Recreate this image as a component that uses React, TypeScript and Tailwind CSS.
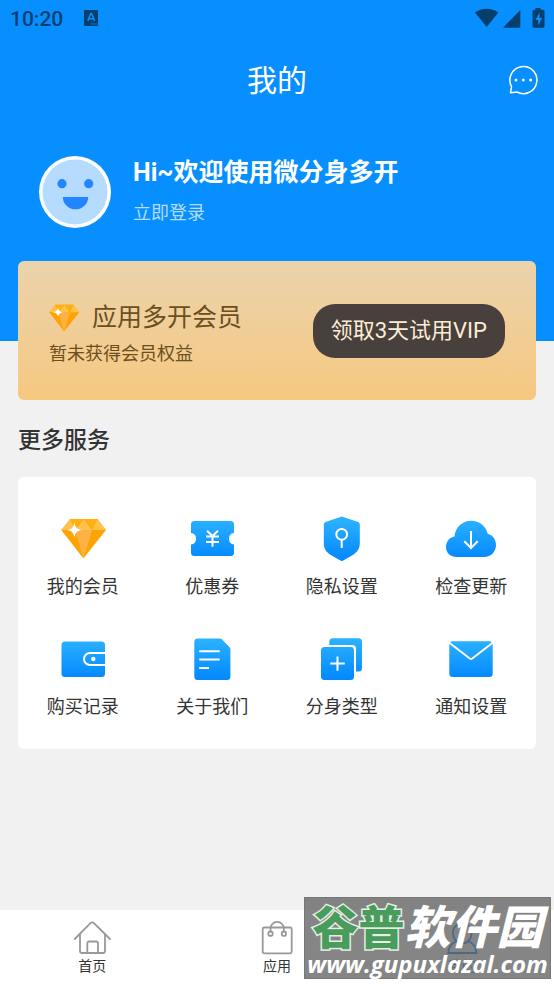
import React from 'react';

const BlueGradient: React.FC<{ id: string }> = ({ id }) => (
  <defs>
    <linearGradient id={id} x1="0" y1="8" x2="0" y2="46" gradientUnits="userSpaceOnUse">
      <stop offset="0" stopColor="#2bb1ff" />
      <stop offset="1" stopColor="#0489ff" />
    </linearGradient>
  </defs>
);

const Diamond: React.FC<{ className: string; viewBox: string }> = ({ className, viewBox }) => (
  <svg className={className} viewBox={viewBox} aria-hidden="true">
    <path d="M13.2 7h27.2L49 18 26.4 46.6 4.3 18z" fill="#ffa305" />
    <path d="M13.2 7 4.3 18h14zM26.8 7 18 18h17.2zM40.4 7 49 18H35.2z" fill="#ffc24c" />
    <path d="M13.2 7h13.6L18 18zM26.8 7h13.6l-5.2 11z" fill="#ffb00f" />
    <path d="M18 18h17.2l-8.8 28.6z" fill="#ffb244" />
    <path d="M17.4 10.8q.8 6.4 7 7.2-6.2.8-7 7.2-.8-6.4-7-7.2 6.200-.8 7-7.200z" fill="#fff" />
  </svg>
);

const Coupon = () => (
  <svg className="size-[52px]" viewBox="0 0 52 52" fill="none" aria-hidden="true">
    <BlueGradient id="coupon" />
    <path d="M8.500 9h36a3.500 3.500 0 0 1 3.500 3.500V21a5.800 5.800 0 0 0 0 11.500v8a3.500 3.500 0 0 1-3.500 3.500h-36A3.500 3.500 0 0 1 5 40.500v-8A5.800 5.800 0 0 0 5 21v-8.500A3.500 3.500 0 0 1 8.500 9z" fill="url(#coupon)" />
    <path d="m21 18.700 5.500 5.300 5.500-5.300M20 24.500h13M20 30h13M26.500 24.500v10.200" stroke="#fff" strokeWidth="2" />
  </svg>
);

const Shield = () => (
  <svg className="size-[52px]" viewBox="0 0 52 52" fill="none" aria-hidden="true">
    <BlueGradient id="shield" />
    <path d="M24.400 4.900q1.400-.6 2.800 0l15 5.200q1.600.6 1.600 2.300v18.600c0 6-2.800 9.400-7 12l-9.600 5.600q-1.400.7-2.800 0L14.800 43c-4.200-2.600-7-6-7-12V12.400q0-1.700 1.600-2.300z" fill="url(#shield)" />
    <circle cx="25.700" cy="22.300" r="5.400" stroke="#fff" strokeWidth="2" />
    <path d="M25.700 27.700V36" stroke="#fff" strokeWidth="2" />
  </svg>
);

const Cloud = () => (
  <svg className="size-[52px]" viewBox="0 0 52 52" fill="none" aria-hidden="true">
    <BlueGradient id="cloud" />
    <path d="M11.500 45C5.500 45 1 40.700 1 35c0-5.400 3.500-9.600 8.500-10.500C10.200 15.500 17.200 8.700 26 8.700c8.300 0 15 5.300 16.700 13C47.700 23 51 27.400 51 33c0 7-5.200 12-12 12z" fill="url(#cloud)" />
    <path d="M26 19v17M19.300 29.300 26 36l6.700-6.700" stroke="#fff" strokeWidth="2" />
  </svg>
);

const Wallet = () => (
  <svg className="size-[52px]" viewBox="0 0 52 52" fill="none" aria-hidden="true">
    <BlueGradient id="wallet" />
    <rect x="4.500" y="9.500" width="43.500" height="35.500" rx="3.500" fill="url(#wallet)" />
    <path d="M48.500 21H33a6 6 0 0 0 0 12h15.500" stroke="#fff" strokeWidth="2" />
    <circle cx="36.300" cy="27" r="2.200" fill="#fff" />
  </svg>
);

const Document = () => (
  <svg className="size-[52px]" viewBox="0 0 52 52" fill="none" aria-hidden="true">
    <BlueGradient id="document" />
    <path d="M11.800 6.400h22q1.200 0 2 .9l7.800 8q.8.800.8 2v27.200a3.500 3.500 0 0 1-3.500 3.500H11.800a3.500 3.500 0 0 1-3.500-3.500V9.900a3.500 3.500 0 0 1 3.500-3.500z" fill="url(#document)" />
    <path d="M13.300 19.300h20.400M13.300 27.600h20.400M13.300 36H23" stroke="#fff" strokeWidth="2" />
  </svg>
);

const Clones = () => (
  <svg className="size-[52px]" viewBox="0 0 52 52" fill="none" aria-hidden="true">
    <BlueGradient id="clones" />
    <rect x="13.300" y="6.300" width="32.700" height="33.200" rx="3.500" fill="url(#clones)" />
    <path d="M4 13h32.500a3.500 3.500 0 0 1 3.500 3.500V42H4z" fill="#fff" />
    <rect x="5" y="15" width="33" height="33" rx="3.500" fill="url(#clones)" />
    <path d="M21.500 24.400v14.400M14.300 31.600h14.400" stroke="#fff" strokeWidth="2" />
  </svg>
);

const Mail = () => (
  <svg className="size-[52px]" viewBox="0 0 52 52" fill="none" aria-hidden="true">
    <BlueGradient id="mail" />
    <rect x="4.300" y="9.300" width="43.400" height="35.700" rx="3.500" fill="url(#mail)" />
    <path d="m4 10.500 20.800 16q1.200.9 2.400 0l20.800-16" stroke="#fff" strokeWidth="2" />
  </svg>
);

const services = [
  { label: '我的会员', icon: <Diamond className="size-[52px]" viewBox="0 0 52 52" /> },
  { label: '优惠券', icon: <Coupon /> },
  { label: '隐私设置', icon: <Shield /> },
  { label: '检查更新', icon: <Cloud /> },
  { label: '购买记录', icon: <Wallet /> },
  { label: '关于我们', icon: <Document /> },
  { label: '分身类型', icon: <Clones /> },
  { label: '通知设置', icon: <Mail /> },
];

const tabs = [
  {
    label: '首页',
    color: 'text-[#333333]',
    icon: (
      <g stroke="#999">
        <path d="M2.700 21 18.500 5.200q1.700-1.700 3.400 0L38 21" />
        <path d="M8 16.500V33q0 2 2 2h21q2 0 2-2V16.500" />
        <path d="M15.300 35v-9.500q0-2 2-2H24q2 0 2 2V35" />
      </g>
    ),
  },
  {
    label: '应用',
    color: 'text-[#333333]',
    icon: (
      <g stroke="#999">
        <rect x="5.700" y="9.500" width="29" height="25.800" rx="1.500" />
        <path d="M13.500 13.500v-3a6.700 6.700 0 0 1 13.400 0v3" />
        <circle cx="13.500" cy="15.700" r="2.200" />
        <circle cx="26.900" cy="15.700" r="2.200" />
      </g>
    ),
  },
  {
    label: '我的',
    color: 'text-[#0590ff]',
    icon: (
      <g stroke="#0590ff">
        <path d="M20.300 5.500c5.500 0 9.400 4 9.400 9.600s-3.900 10.200-9.400 10.200-9.400-4.600-9.400-10.200 3.900-9.600 9.400-9.600z" />
        <path d="M13.700 23.500C9 25.700 6.500 29.500 6.200 35h28.300c-.3-5.500-3-9.300-7.700-11.500" />
      </g>
    ),
  },
];

const StatusBar = () => (
  <div className="flex h-9 items-center justify-between pr-[9px] pl-[10px] text-[#063e6e]">
    <div className="flex items-center gap-5">
      <span className="pt-0.5 text-[21px] leading-7 font-medium">10:20</span>
      <svg className="size-4" viewBox="0 0 16 16" aria-hidden="true">
        <rect x="1" width="14" height="16" rx="1" fill="currentColor" />
        <path d="m4.800 11 3-7.500h.8l3 7.500M5.800 8.700h4.800" stroke="#078fff" strokeWidth="1.500" fill="none" />
        <path d="M8 14h6" stroke="#078fff" strokeWidth="1" strokeDasharray="1.500 .7" />
      </svg>
    </div>
    <svg className="h-5 w-[70px]" viewBox="0 0 70 20" fill="currentColor" aria-hidden="true">
      <path d="M0 4.500C3.500 1.900 7.500.8 11.700.8s8.200 1.100 11.700 3.700L11.700 19z" />
      <path d="M28 19.700 45.300 2v17.700z" />
      <path d="M60.500 0h5v1.800H68q1.500 0 1.500 1.500v15q0 1.500-1.500 1.500h-9q-1.500 0-1.500-1.500v-15q0-1.500 1.500-1.500h1.500z" />
      <path d="M64.500 4.500 60.500 12h2.700v5.500l4-7.500h-2.700z" fill="#078fff" />
    </svg>
  </div>
);

const Header = () => (
  <header className="bg-[#078fff] pb-[113px] text-white">
    <StatusBar />
    <div className="grid h-[88px] grid-cols-[1fr_auto_1fr] items-center px-[15px]">
      <h1 className="col-start-2 pt-0.5 text-[30px] leading-10">我的</h1>
      <button type="button" aria-label="消息" className="justify-self-end">
        <svg className="size-8" viewBox="0 0 32 32" fill="none" stroke="currentColor" aria-hidden="true">
          <path d="M3.500 28.800 4.500 22.500A13.500 13.500 0 1 1 10 28z" strokeWidth="1.500" strokeLinejoin="round" />
          <g fill="currentColor" stroke="none">
            <circle cx="9" cy="16" r="1.500" />
            <circle cx="16.300" cy="16" r="1.500" />
            <circle cx="23.600" cy="16" r="1.500" />
          </g>
        </svg>
      </button>
    </div>
    <div className="flex items-center gap-[22px] pt-8 pl-[39px]">
      <svg className="size-[72px]" viewBox="0 0 72 72" aria-hidden="true">
        <circle cx="36" cy="36" r="36" fill="#fff" />
        <circle cx="36" cy="36" r="32.500" fill="#b5dcff" />
        <circle cx="23" cy="27.700" r="4.600" fill="#2385ff" />
        <circle cx="49.700" cy="27.700" r="4.600" fill="#2385ff" />
        <path d="M23.800 41h25.400a12.700 12.300 0 0 1-25.400 0z" fill="#2385ff" />
      </svg>
      <div className="flex flex-col items-start gap-[10px]">
        <p className="text-[25px] leading-8 font-bold">Hi~欢迎使用微分身多开</p>
        <a href="#login" className="text-[18px] leading-7 text-[#b5dcff]">立即登录</a>
      </div>
    </div>
  </header>
);

const MemberCard = () => (
  <section className="flex h-[139px] items-center justify-between rounded-md bg-linear-to-b from-[#ebd3ac] to-[#f6c880] px-[31px] text-[#6c4f20]">
    <div className="flex flex-col gap-[6px] pt-2">
      <div className="flex items-center gap-3">
        <Diamond className="h-7 w-[31px]" viewBox="4 6 46 41" />
        <h2 className="text-[25px] leading-8">应用多开会员</h2>
      </div>
      <p className="text-[18px] leading-7">暂未获得会员权益</p>
    </div>
    <button type="button" className="h-[54px] rounded-[22px] bg-[#47403c] px-[18px] text-[22px] text-[#ffecd6]">
      领取3天试用VIP
    </button>
  </section>
);

const Services = () => (
  <section>
    <h2 className="mt-[27px] mb-[22px] text-[23px] leading-7 font-medium text-[#333333]">更多服务</h2>
    <div className="grid grid-cols-4 gap-y-[31px] rounded-md bg-white pt-[35px] pb-7">
      {services.map(({ label, icon }) => (
        <button key={label} type="button" className="flex flex-col items-center gap-[9px] text-[18px] leading-7 text-[#333333]">
          {icon}
          {label}
        </button>
      ))}
    </div>
  </section>
);

const TabBar = () => (
  <nav className="grid grid-cols-3 bg-white pt-2 pb-[10px]">
    {tabs.map(({ label, color, icon }) => (
      <a key={label} href={`#${label}`} className={`flex flex-col items-center text-[14px] leading-4 ${color}`}>
        <svg className="size-10" viewBox="0 0 40 40" fill="none" strokeWidth="1.800" strokeLinecap="round" aria-hidden="true">
          {icon}
        </svg>
        {label}
      </a>
    ))}
  </nav>
);

const Watermark = () => (
  <div className="pointer-events-none absolute right-[3px] bottom-[5px] flex h-[82px] w-[247px] flex-col items-center justify-end border border-[#777777] bg-[#5f5f5f]/76 whitespace-nowrap text-white">
    <p className="text-[46px] leading-[44px] font-black">
      <span className="text-[#4a9c5d] [-webkit-text-stroke:3px_#e4efe6] [paint-order:stroke]">谷普</span>
      <span className="italic">软件园</span>
    </p>
    <p className="font-['Open_Sans'] text-[24px] leading-7 font-bold italic">www.gupuxlazal.com</p>
  </div>
);

const App: React.FC = () => {
  return (
    <div className="relative flex min-h-screen flex-col bg-[#f1f1f1] font-[Roboto,'Noto_Sans_CJK_SC',sans-serif]">
      <Header />
      <main className="-mt-20 flex-1 px-[18px] pb-8">
        <MemberCard />
        <Services />
      </main>
      <TabBar />
      <Watermark />
    </div>
  );
};

export default App;
